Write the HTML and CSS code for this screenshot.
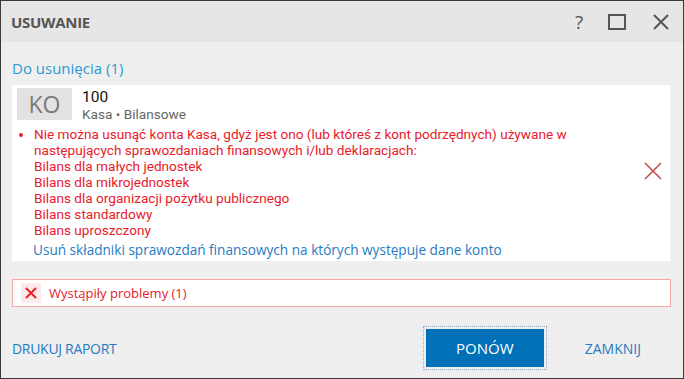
FILE: index.html
```html
<!DOCTYPE html>
<html lang="pl">
<head>
    <meta charset="UTF-8">
    <title>Usuwanie</title>
    <link rel="stylesheet" href="styles.css">
</head>
<body>
    <div class="window">
        <div class="titlebar">
            <span class="title">USUWANIE</span>
            <div class="controls">
                <span class="ctl help">?</span>
                <span class="ctl">
                    <svg width="18" height="16" viewBox="0 0 18 16"><rect x="1" y="1" width="16" height="14" fill="none" stroke="#555" stroke-width="2"/></svg>
                </span>
                <span class="ctl">
                    <svg width="16" height="16" viewBox="0 0 16 16"><path d="M1 1L15 15M15 1L1 15" stroke="#555" stroke-width="2"/></svg>
                </span>
            </div>
        </div>

        <div class="content">
            <div class="section-title">Do usunięcia (1)</div>

            <div class="card">
                <div class="card-head">
                    <div class="badge">KO</div>
                    <div class="account">
                        <div class="account-no">100</div>
                        <div class="account-desc">Kasa • Bilansowe</div>
                    </div>
                </div>
                <div class="card-body">
                    <div class="messages">
                        <ul class="errors">
                            <li>Nie można usunąć konta Kasa, gdyż jest ono (lub któreś z kont podrzędnych) używane w następujących sprawozdaniach finansowych i/lub deklaracjach:
                                <div>Bilans dla małych jednostek</div>
                                <div>Bilans dla mikrojednostek</div>
                                <div>Bilans dla organizacji pożytku publicznego</div>
                                <div>Bilans standardowy</div>
                                <div>Bilans uproszczony</div>
                            </li>
                        </ul>
                        <a class="link" href="#">Usuń składniki sprawozdań finansowych na których występuje dane konto</a>
                    </div>
                    <div class="remove">
                        <svg width="18" height="18" viewBox="0 0 18 18"><path d="M1 1L17 17M17 1L1 17" stroke="#c0504d" stroke-width="1.6"/></svg>
                    </div>
                </div>
            </div>

            <div class="status">
                <span class="status-icon">
                    <svg width="12" height="12" viewBox="0 0 12 12"><path d="M1 1L11 11M11 1L1 11" stroke="#e8202a" stroke-width="2"/></svg>
                </span>
                <span>Wystąpiły problemy (1)</span>
            </div>

            <div class="footer">
                <a class="text-btn" href="#">DRUKUJ RAPORT</a>
                <div class="footer-right">
                    <span class="primary-wrap"><button class="primary">PONÓW</button></span>
                    <a class="text-btn close" href="#">ZAMKNIJ</a>
                </div>
            </div>
        </div>
    </div>
</body>
</html>
```

FILE: styles.css
```css
body {
    margin: 0;
    font-family: "Open Sans", "Noto Sans", sans-serif;
}
.window {
    width: 684px;
    height: 379px;
    box-sizing: border-box;
    border: 1px solid #3a3a3a;
    background: #efefef;
}
.titlebar {
    height: 41px;
    background: #e6e6e6;
    display: flex;
    align-items: center;
    justify-content: space-between;
    padding-left: 10px;
}
.title {
    font-size: 15px;
    font-weight: bold;
    color: #555;
    letter-spacing: -0.3px;
}
.controls {
    display: flex;
    align-items: center;
    height: 100%;
}
.ctl {
    width: 44px;
    display: flex;
    justify-content: center;
    color: #555;
}
.help {
    font-size: 19px;
    width: 32px;
}
.content {
    padding: 0 13px 0 11px;
}
.section-title {
    height: 43px;
    line-height: 20px;
    padding-top: 16px;
    box-sizing: border-box;
    font-size: 15px;
    color: #2b9ad3;
}
.card {
    background: #fff;
    padding: 3px 1px 8px 5px;
    height: 176px;
    box-sizing: border-box;
}
.card-head {
    display: flex;
    gap: 10px;
}
.badge {
    width: 55px;
    height: 32px;
    background: #e2e2e2;
    color: #7a7a7a;
    font-size: 23px;
    line-height: 32px;
    text-align: center;
}
.account {
    font-family: Roboto, "Open Sans", sans-serif;
}
.account-no {
    font-size: 15.5px;
    color: #111;
    line-height: 16px;
    margin-top: 1px;
}
.account-desc {
    font-size: 13.6px;
    color: #666;
    line-height: 18px;
}
.card-body {
    display: flex;
    align-items: center;
}
.messages {
    flex: 1;
}
.errors {
    margin: 3px 0 0 0;
    padding-left: 17px;
    color: #e8202a;
    font-family: Roboto, "Open Sans", sans-serif;
    font-size: 13.6px;
    line-height: 16px;
    max-width: 545px;
}
.link {
    display: block;
    margin: 2px 0 0 16px;
    font-size: 13.6px;
    color: #1f7bc3;
    text-decoration: none;
}
.remove {
    width: 32px;
    display: flex;
    justify-content: center;
    margin-top: -40px;
}
.status {
    margin-top: 18px;
    height: 28px;
    box-sizing: border-box;
    background: #fff;
    border: 1px solid #f2a6a6;
    display: flex;
    align-items: center;
    gap: 8px;
    padding-left: 8px;
    font-size: 13px;
    color: #e8202a;
    width: 659px;
}
.status-icon {
    width: 20px;
    height: 20px;
    background: #fdeaea;
    display: flex;
    align-items: center;
    justify-content: center;
}
.footer {
    margin-top: 19px;
    display: flex;
    align-items: center;
    justify-content: space-between;
}
.text-btn {
    font-size: 14px;
    color: #1f7bc3;
    text-decoration: none;
    letter-spacing: -0.3px;
}
.close {
    letter-spacing: 0;
}
.footer-right {
    display: flex;
    align-items: center;
    gap: 38px;
    margin-right: 29px;
}
.primary-wrap {
    border: 1px dotted #8aaac8;
    padding: 2px;
    display: flex;
}
.primary {
    width: 118px;
    height: 38px;
    border: none;
    background: #0070b8;
    color: #fff;
    font-family: inherit;
    font-size: 15px;
}
```
